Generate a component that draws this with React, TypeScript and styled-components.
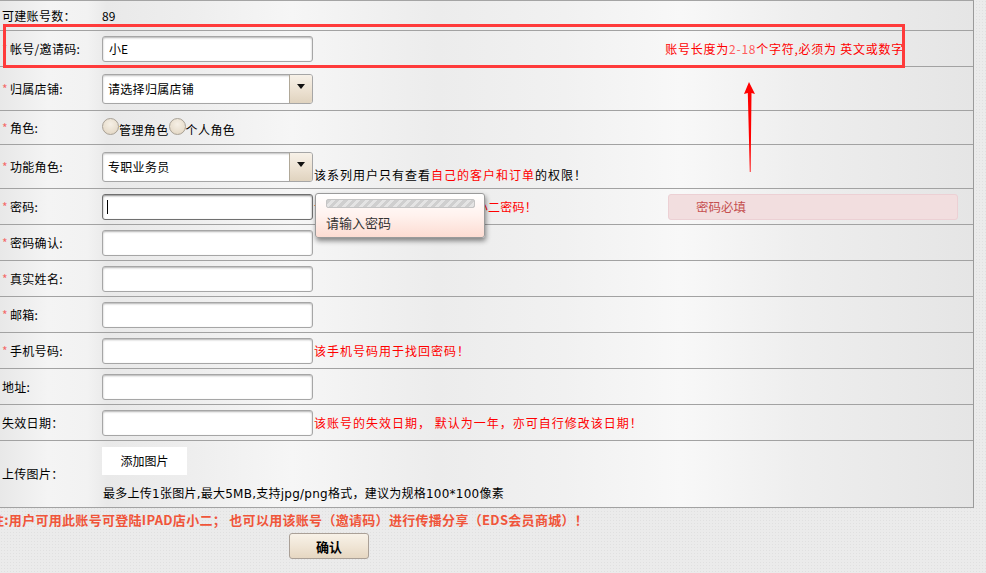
import styled, { createGlobalStyle } from 'styled-components'

const GlobalStyle = createGlobalStyle`
  html, body {
    margin: 0;
    padding: 0;
  }
  body {
    background-color: #ebebeb;
    background-image: radial-gradient(#e0e0e0 0.7px, transparent 0.9px);
    background-size: 3px 3px;
    font-family: "SimSun", "Noto Sans CJK SC", "Noto Sans", sans-serif;
    font-size: 12px;
    color: #000;
    overflow: hidden;
  }
`

const Page = styled.div`
  position: relative;
  width: 986px;
  height: 573px;
`

const Table = styled.div`
  width: 974px;
  box-sizing: border-box;
  border-top: 1px solid #a4a4a4;
  border-right: 1px solid #9a9a9a;
`

const Row = styled.div<{ $h: number }>`
  display: flex;
  height: ${({ $h }) => $h}px;
  box-sizing: border-box;
  border-bottom: 1px solid #a2a2a2;
  background: linear-gradient(
    90deg,
    #e8e8e8 0%,
    #f4f4f4 5%,
    #f2f2f2 9%,
    #e9e9e9 11%,
    #eeeeee 20%,
    #f6f6f6 30%,
    #ececec 45%,
    #f1f1f1 58%,
    #f8f8f8 70%,
    #eeeeee 82%,
    #e5e5e5 100%
  );
`

const LabelCell = styled.div`
  width: 102px;
  flex: none;
  display: flex;
  align-items: center;
  padding-left: 2px;
  box-sizing: border-box;
  white-space: nowrap;
  line-height: 14px;
  letter-spacing: 0.3px;
`

const Star = styled.span`
  color: #f46a6a;
  width: 8px;
  display: inline-block;
`

const ValueCell = styled.div<{ $col?: boolean; $align?: string }>`
  flex: 1;
  position: relative;
  display: flex;
  flex-direction: ${({ $col }) => ($col ? 'column' : 'row')};
  align-items: ${({ $align }) => $align || 'center'};
  justify-content: ${({ $col }) => ($col ? 'center' : 'flex-start')};
  white-space: nowrap;
  line-height: 14px;
`

const TextInput = styled.input<{ $focus?: boolean }>`
  width: 211px;
  height: 26px;
  box-sizing: border-box;
  margin: 0;
  padding: 0 6px;
  border: 1px solid ${({ $focus }) => ($focus ? '#707070' : '#a6a6a6')};
  border-radius: 3px;
  box-shadow: inset 0 1px 2px rgba(0, 0, 0, ${({ $focus }) => ($focus ? 0.45 : 0.3)});
  background: #fff;
  font: inherit;
  color: #000;
  outline: none;
  flex: none;
`

const Caret = styled.span`
  position: absolute;
  left: 5px;
  top: 50%;
  margin-top: -7px;
  width: 1px;
  height: 14px;
  background: #000;
`

const InputWrap = styled.div`
  position: relative;
  display: flex;
  flex: none;
`

const SelectBox = styled.div`
  width: 211px;
  height: 30px;
  box-sizing: border-box;
  flex: none;
  display: flex;
  border: 1px solid #a6a6a6;
  border-radius: 3px;
  box-shadow: inset 0 1px 2px rgba(0, 0, 0, 0.25);
  background: #fff;
  overflow: hidden;
`

const SelectValue = styled.div`
  flex: 1;
  display: flex;
  align-items: center;
  padding-left: 5px;
  letter-spacing: 0.3px;
`

const SelectButton = styled.div`
  width: 23px;
  flex: none;
  border-left: 1px solid #b0a898;
  background: linear-gradient(180deg, #f7f1e8 0%, #ebe0d0 60%, #e0d3bf 100%);
  display: flex;
  justify-content: center;
  padding-top: 9px;
  box-sizing: border-box;

  &::after {
    content: '';
    width: 0;
    height: 0;
    border-left: 4px solid transparent;
    border-right: 4px solid transparent;
    border-top: 5px solid #111;
  }
`

const InlineGroup = styled.label`
  display: flex;
  align-items: flex-end;
`

const Radio = styled.span`
  width: 15px;
  height: 15px;
  border-radius: 50%;
  border: 1px solid #a8a196;
  background: radial-gradient(circle at 50% 35%, #f6f0e6 0%, #e9dfcf 60%, #ddd0bb 100%);
  flex: none;
  margin-bottom: 2px;
`

const RadioText = styled.span`
  line-height: 14px;
  letter-spacing: 0.4px;
`

const Note = styled.span<{ $red?: boolean }>`
  color: ${({ $red }) => ($red ? '#ff0000' : '#000')};
  margin-left: 1px;
  letter-spacing: 1px;
`

const PasswordNote = styled(Note)`
  letter-spacing: 0.25px;
`

const Red = styled.span`
  color: #ff0000;
`

const Pink = styled.span`
  color: #ff5c5c;
`

const Hint = styled.span`
  margin-left: auto;
  margin-right: 69px;
  color: #ff0000;
  letter-spacing: 0.75px;
`

const ErrorBox = styled.div`
  margin-left: auto;
  margin-right: 15px;
  width: 290px;
  height: 26px;
  box-sizing: border-box;
  border: 1px solid #ecd0d4;
  border-radius: 3px;
  background: #f2dedf;
  color: #c5504f;
  display: flex;
  align-items: center;
  padding-left: 27px;
  font-size: 12.5px;
`

const Tooltip = styled.div`
  position: absolute;
  left: 213px;
  top: 4px;
  width: 170px;
  height: 45px;
  box-sizing: border-box;
  border: 1px solid #9a9a9a;
  border-radius: 3px;
  background: linear-gradient(180deg, #ffffff 0%, #fff2ee 50%, #fddcd2 100%);
  box-shadow: 1px 3px 5px rgba(0, 0, 0, 0.45);
  padding: 5px 0 0 10px;
  z-index: 5;
  color: #333;
  font-size: 13px;
  line-height: 16px;
`

const Strength = styled.div`
  width: 149px;
  height: 9px;
  box-sizing: border-box;
  border: 1px solid #c4c4c4;
  border-radius: 2px;
  background: repeating-linear-gradient(135deg, #cfcfcf 0 3px, #e4e4e4 3px 6px);
  margin-bottom: 7px;
`

const UploadButton = styled.div`
  width: 85px;
  height: 28px;
  background: #fff;
  display: flex;
  align-items: center;
  justify-content: center;
`

const UploadHint = styled.div`
  margin-top: 12px;
  padding-left: 1px;
  font-family: "DejaVu Sans", "Noto Sans CJK SC", sans-serif;
  letter-spacing: 0.25px;
`

const FooterNote = styled.div`
  margin: 5px 0 0 -9px;
  font-weight: bold;
  font-size: 13px;
  color: #f0553a;
  line-height: 14px;
  white-space: nowrap;
  letter-spacing: 0.3px;
`

const ConfirmButton = styled.button`
  display: block;
  margin: 6px 0 0 289px;
  width: 80px;
  height: 26px;
  border: 1px solid #aaa097;
  border-radius: 3px;
  background: linear-gradient(180deg, #f8f2e8 0%, #efe4d4 55%, #e6d7c2 100%);
  font: inherit;
  font-weight: bold;
  font-size: 13px;
  color: #000;
  padding: 0;
`

const RedFrame = styled.div`
  position: absolute;
  left: 3px;
  top: 24px;
  width: 902px;
  height: 44px;
  box-sizing: border-box;
  border: 3px solid #ff3b3b;
  pointer-events: none;
`

const Arrow = styled.svg`
  position: absolute;
  left: 740px;
  top: 82px;
`

type Field = {
  label: string
  star?: boolean
  note?: string
}

const plainFields: Field[] = [
  { label: '密码确认:', star: true },
  { label: '真实姓名:', star: true },
  { label: '邮箱:', star: true },
  { label: '手机号码:', star: true, note: '该手机号码用于找回密码！' },
  { label: '地址:' },
  { label: '失效日期：', note: '该账号的失效日期， 默认为一年，亦可自行修改该日期！' },
]

const Label = ({ text, star }: { text: string; star?: boolean }) => (
  <LabelCell>
    {star && <Star>*</Star>}
    {star ? <span>{text}</span> : text}
  </LabelCell>
)

export default function App() {
  return (
    <Page>
      <GlobalStyle />
      <Table>
        <Row $h={30}>
          <LabelCell>可建账号数：</LabelCell>
          <ValueCell>89</ValueCell>
        </Row>
        <Row $h={36}>
          <Label text="帐号/邀请码:" star />
          <ValueCell>
            <TextInput defaultValue="小E" />
            <Hint>
              账号长度为<Pink>2-18</Pink>个字符,必须为 英文或数字
            </Hint>
          </ValueCell>
        </Row>
        <Row $h={44}>
          <Label text="归属店铺:" star />
          <ValueCell>
            <SelectBox>
              <SelectValue>请选择归属店铺</SelectValue>
              <SelectButton />
            </SelectBox>
          </ValueCell>
        </Row>
        <Row $h={34}>
          <Label text="角色:" star />
          <ValueCell>
            <InlineGroup>
              <Radio />
              <RadioText>管理角色</RadioText>
            </InlineGroup>
            <InlineGroup>
              <Radio />
              <RadioText>个人角色</RadioText>
            </InlineGroup>
          </ValueCell>
        </Row>
        <Row $h={44}>
          <Label text="功能角色:" star />
          <ValueCell>
            <InlineGroup>
              <SelectBox>
                <SelectValue>专职业务员</SelectValue>
                <SelectButton />
              </SelectBox>
              <Note>
                该系列用户只有查看<Red>自己的客户和订单</Red>的权限！
              </Note>
            </InlineGroup>
          </ValueCell>
        </Row>
        <Row $h={36}>
          <Label text="密码:" star />
          <ValueCell>
            <InputWrap>
              <TextInput $focus type="password" />
              <Caret />
            </InputWrap>
            <PasswordNote $red>该密码为用户用于登陆IPAD店小二密码！</PasswordNote>
            <Tooltip>
              <Strength />
              请输入密码
            </Tooltip>
            <ErrorBox>密码必填</ErrorBox>
          </ValueCell>
        </Row>
        {plainFields.map((f) => (
          <Row $h={36} key={f.label}>
            <Label text={f.label} star={f.star} />
            <ValueCell>
              <TextInput />
              {f.note && <Note $red>{f.note}</Note>}
            </ValueCell>
          </Row>
        ))}
        <Row $h={67}>
          <LabelCell>上传图片：</LabelCell>
          <ValueCell $col $align="flex-start">
            <UploadButton>添加图片</UploadButton>
            <UploadHint>最多上传1张图片,最大5MB,支持jpg/png格式，建议为规格100*100像素</UploadHint>
          </ValueCell>
        </Row>
      </Table>
      <FooterNote>注:用户可用此账号可登陆IPAD店小二； 也可以用该账号（邀请码）进行传播分享（EDS会员商城）！</FooterNote>
      <ConfirmButton>确认</ConfirmButton>

      <RedFrame />
      <Arrow width="20" height="92" viewBox="0 0 20 92">
        <polygon points="9,0 15,12 11.5,11 10.6,90 9.8,90 7.8,11 4,12" fill="#ff0000" />
      </Arrow>
    </Page>
  )
}
